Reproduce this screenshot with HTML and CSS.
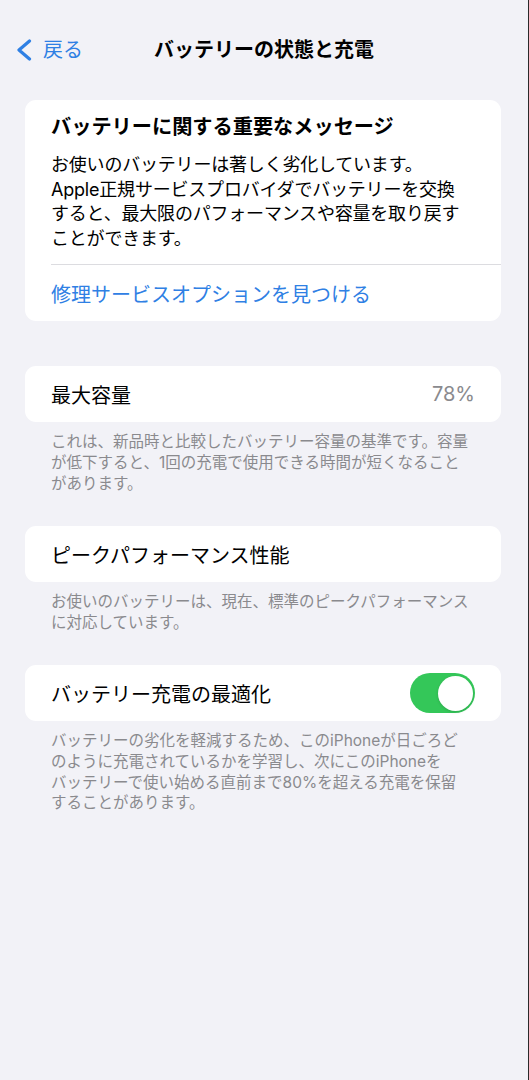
FILE: index.html
```html
<!DOCTYPE html>
<html lang="ja">
<head>
<meta charset="utf-8">
<title>バッテリーの状態と充電</title>
<link rel="stylesheet" href="styles.css">
</head>
<body>
<div class="screen">
  <header class="nav">
    <a class="back">
      <svg class="chev" width="16" height="22" viewBox="0 0 16 22"><polyline points="13.5,2 3,11 13.5,20" fill="none" stroke="#2f80e4" stroke-width="3.2" stroke-linecap="round" stroke-linejoin="round"/></svg>
      <span>戻る</span>
    </a>
    <h1 class="nav-title">バッテリーの状態と充電</h1>
    <div class="nav-side"></div>
  </header>

  <section class="card message">
    <div class="msg-body">
      <h2 class="msg-title">バッテリーに関する重要なメッセージ</h2>
      <p class="msg-text">お使いのバッテリーは著しく劣化しています。<br>Apple正規サービスプロバイダでバッテリーを交換<br>すると、最大限のパフォーマンスや容量を取り戻す<br>ことができます。</p>
    </div>
    <div class="row link-row"><span class="link">修理サービスオプションを見つける</span></div>
  </section>

  <section class="card gap-first">
    <div class="row"><span class="label">最大容量</span><span class="value">78%</span></div>
  </section>
  <p class="footer">これは、新品時と比較したバッテリー容量の基準です。容量<br>が低下すると、1回の充電で使用できる時間が短くなること<br>があります。</p>

  <section class="card gap">
    <div class="row"><span class="label">ピークパフォーマンス性能</span></div>
  </section>
  <p class="footer">お使いのバッテリーは、現在、標準のピークパフォーマンス<br>に対応しています。</p>

  <section class="card gap">
    <div class="row"><span class="label">バッテリー充電の最適化</span><span class="toggle"><span class="knob"></span></span></div>
  </section>
  <p class="footer">バッテリーの劣化を軽減するため、このiPhoneが日ごろど<br>のように充電されているかを学習し、次にこのiPhoneを<br>バッテリーで使い始める直前まで80%を超える充電を保留<br>することがあります。</p>
</div>
</body>
</html>
```

FILE: styles.css
```css
html, body {
  margin: 0;
  padding: 0;
  background: #f2f2f7;
}
body {
  font-family: Inter, "Noto Sans CJK JP", "Noto Sans", sans-serif;
  color: #000;
}
.screen {
  width: 529px;
  min-height: 1080px;
  background: #f2f2f7;
  border-right: 1px solid #2a2a2a;
  box-sizing: border-box;
}
.nav {
  display: grid;
  grid-template-columns: 1fr auto 1fr;
  align-items: center;
  height: 40px;
  padding-top: 30px;
  margin-bottom: 30px;
}
.back {
  display: flex;
  align-items: center;
  gap: 11px;
  padding-left: 16px;
  color: #2f80e4;
  font-size: 20px;
  line-height: 26px;
}
.chev { display: block; }
.nav-title {
  margin: 0;
  font-size: 20px;
  font-weight: 700;
  line-height: 26px;
}
.card {
  background: #fff;
  border-radius: 11px;
  margin: 0 27px 0 25px;
  overflow: hidden;
}
.msg-body {
  padding: 14px 20px 13px 26px;
}
.msg-title {
  margin: 0;
  font-size: 20.2px;
  font-weight: 700;
  line-height: 26px;
}
.msg-text {
  margin: 13px 0 0;
  font-size: 18px;
  line-height: 24.6px;
  letter-spacing: -0.2px;
}
.row {
  display: flex;
  align-items: center;
  justify-content: space-between;
  height: 56px;
  padding: 0 26px;
  font-size: 20px;
}
.link-row {
  margin-left: 26px;
  padding-left: 0;
  border-top: 1px solid #dcdce0;
}
.link { color: #2f80e4; }
.value { color: #8a8a8e; }
.gap-first { margin-top: 45px; }
.gap { margin-top: 32px; }
.footer {
  margin: 10px 0 0;
  padding: 0 20px 0 51px;
  font-size: 15.5px;
  line-height: 20.6px;
  color: #8a8a8e;
}
.toggle {
  display: flex;
  align-items: center;
  justify-content: flex-end;
  width: 65px;
  height: 40px;
  border-radius: 20px;
  background: #34c759;
  padding: 2.5px;
  box-sizing: border-box;
}
.knob {
  width: 35px;
  height: 35px;
  border-radius: 50%;
  background: #fff;
  box-shadow: 0 1px 3px rgba(0,0,0,0.15);
}
```
